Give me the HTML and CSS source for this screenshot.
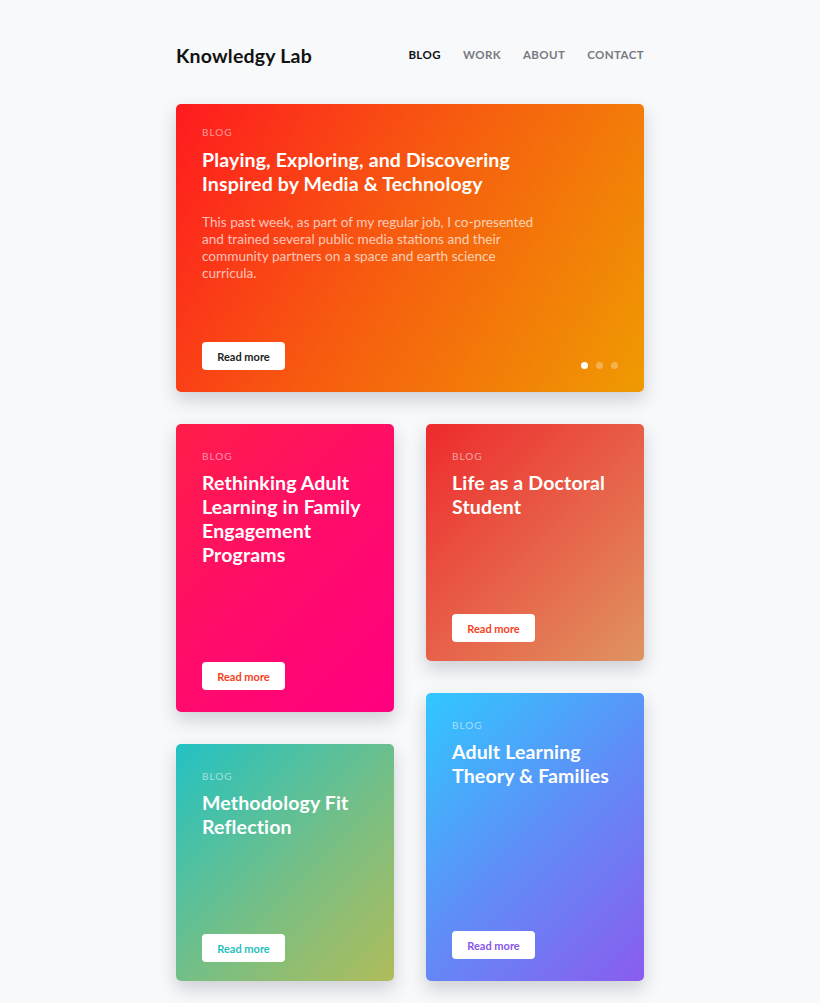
FILE: index.html
```html
<!DOCTYPE html>
<html lang="en">
<head>
<meta charset="utf-8">
<title>Knowledgy Lab</title>
<link rel="stylesheet" href="styles.css">
</head>
<body>
<div class="page">
  <header class="header">
    <div class="logo">Knowledgy Lab</div>
    <nav class="nav">
      <a class="nav-link active" href="#">BLOG</a>
      <a class="nav-link" href="#">WORK</a>
      <a class="nav-link" href="#">ABOUT</a>
      <a class="nav-link" href="#">CONTACT</a>
    </nav>
  </header>

  <section class="card hero">
    <div class="label">BLOG</div>
    <h1 class="hero-title">Playing, Exploring, and Discovering Inspired by Media &amp; Technology</h1>
    <p class="hero-text">This past week, as part of my regular job, I co-presented and trained several public media stations and their community partners on a space and earth science curricula.</p>
    <div class="hero-foot">
      <a class="btn btn-dark" href="#">Read more</a>
      <div class="dots"><span class="dot on"></span><span class="dot"></span><span class="dot"></span></div>
    </div>
  </section>

  <div class="grid">
    <div class="col">
      <article class="card tall pink">
        <div class="label">BLOG</div>
        <h2 class="card-title">Rethinking Adult Learning in Family Engagement Programs</h2>
        <a class="btn btn-orange" href="#">Read more</a>
      </article>
      <article class="card short teal">
        <div class="label">BLOG</div>
        <h2 class="card-title">Methodology Fit Reflection</h2>
        <a class="btn btn-teal" href="#">Read more</a>
      </article>
    </div>
    <div class="col">
      <article class="card short coral">
        <div class="label">BLOG</div>
        <h2 class="card-title">Life as a Doctoral Student</h2>
        <a class="btn btn-orange" href="#">Read more</a>
      </article>
      <article class="card tall blue">
        <div class="label">BLOG</div>
        <h2 class="card-title">Adult Learning Theory &amp; Families</h2>
        <a class="btn btn-purple" href="#">Read more</a>
      </article>
    </div>
  </div>
</div>
</body>
</html>
```

FILE: styles.css
```css
* { box-sizing: border-box; }
html, body { margin: 0; padding: 0; }
body {
  background: #f8f9fb;
  font-family: Lato, "Open Sans", "DejaVu Sans", sans-serif;
  color: #111;
}
.page {
  width: 468px;
  margin: 0 auto;
  padding: 44px 0 40px;
}
.header {
  display: flex;
  align-items: center;
  justify-content: space-between;
  height: 22px;
  margin-bottom: 38px;
}
.logo {
  font-size: 19.5px;
  font-weight: 700;
  letter-spacing: 0.2px;
  color: #111;
}
.nav {
  display: flex;
  gap: 22px;
  margin-top: -2px;
}
.nav-link {
  font-size: 11.5px;
  font-weight: 700;
  letter-spacing: 0.4px;
  color: #777a80;
  text-decoration: none;
}
.nav-link.active { color: #111; }

.card {
  border-radius: 5px;
  box-shadow: 0 8px 18px rgba(40, 40, 60, 0.2);
  padding: 26px 26px 22px;
  display: flex;
  flex-direction: column;
  align-items: flex-start;
  color: #fff;
}
.hero {
  height: 288px;
  padding-top: 22px;
  background: linear-gradient(120deg, #ff1a1f 0%, #f75a10 45%, #ef9b02 100%);
}
.label {
  font-size: 10px;
  line-height: 12px;
  letter-spacing: 1px;
  color: rgba(255, 255, 255, 0.55);
}
.hero-title {
  margin: 10px 0 0;
  font-size: 19.5px;
  line-height: 24px;
  font-weight: 700;
  letter-spacing: 0.15px;
  max-width: 330px;
}
.hero-text {
  margin: 18px 0 0;
  font-size: 13.6px;
  line-height: 17px;
  max-width: 340px;
  color: rgba(255, 255, 255, 0.7);
}
.hero-foot {
  margin-top: auto;
  width: 100%;
  display: flex;
  align-items: flex-end;
  justify-content: space-between;
}
.dots {
  display: flex;
  gap: 8px;
  margin-bottom: 1px;
}
.dot {
  width: 7px;
  height: 7px;
  border-radius: 50%;
  background: rgba(255, 255, 255, 0.3);
}
.dot.on { background: #fff; }

.btn {
  display: inline-flex;
  align-items: center;
  justify-content: center;
  width: 83px;
  height: 28px;
  background: #fff;
  border-radius: 4px;
  font-size: 11px;
  font-weight: 700;
  text-decoration: none;
}
.card > .btn { margin-top: auto; }
.btn-dark { color: #222; }
.btn-orange { color: #f5421c; }
.btn-teal { color: #27c1bd; }
.btn-purple { color: #8756ea; }

.grid {
  display: flex;
  gap: 32px;
  margin-top: 32px;
}
.col {
  flex: 1;
  display: flex;
  flex-direction: column;
  gap: 32px;
}
.tall { height: 288px; }
.short { height: 237px; padding-bottom: 19px; }
.card-title {
  margin: 9px 0 0;
  font-size: 19.5px;
  line-height: 24px;
  font-weight: 700;
  letter-spacing: 0.15px;
}
.pink { background: linear-gradient(135deg, #ff1d48 0%, #ff0c6a 50%, #ff0080 100%); }
.coral { background: linear-gradient(135deg, #ee2a2c 0%, #e7644a 55%, #df9462 100%); }
.teal { background: linear-gradient(135deg, #22c2c4 0%, #76bf85 55%, #b0bc5a 100%); }
.blue { background: linear-gradient(135deg, #30c8ff 0%, #5f8ef7 50%, #8a5cee 100%); }
```
